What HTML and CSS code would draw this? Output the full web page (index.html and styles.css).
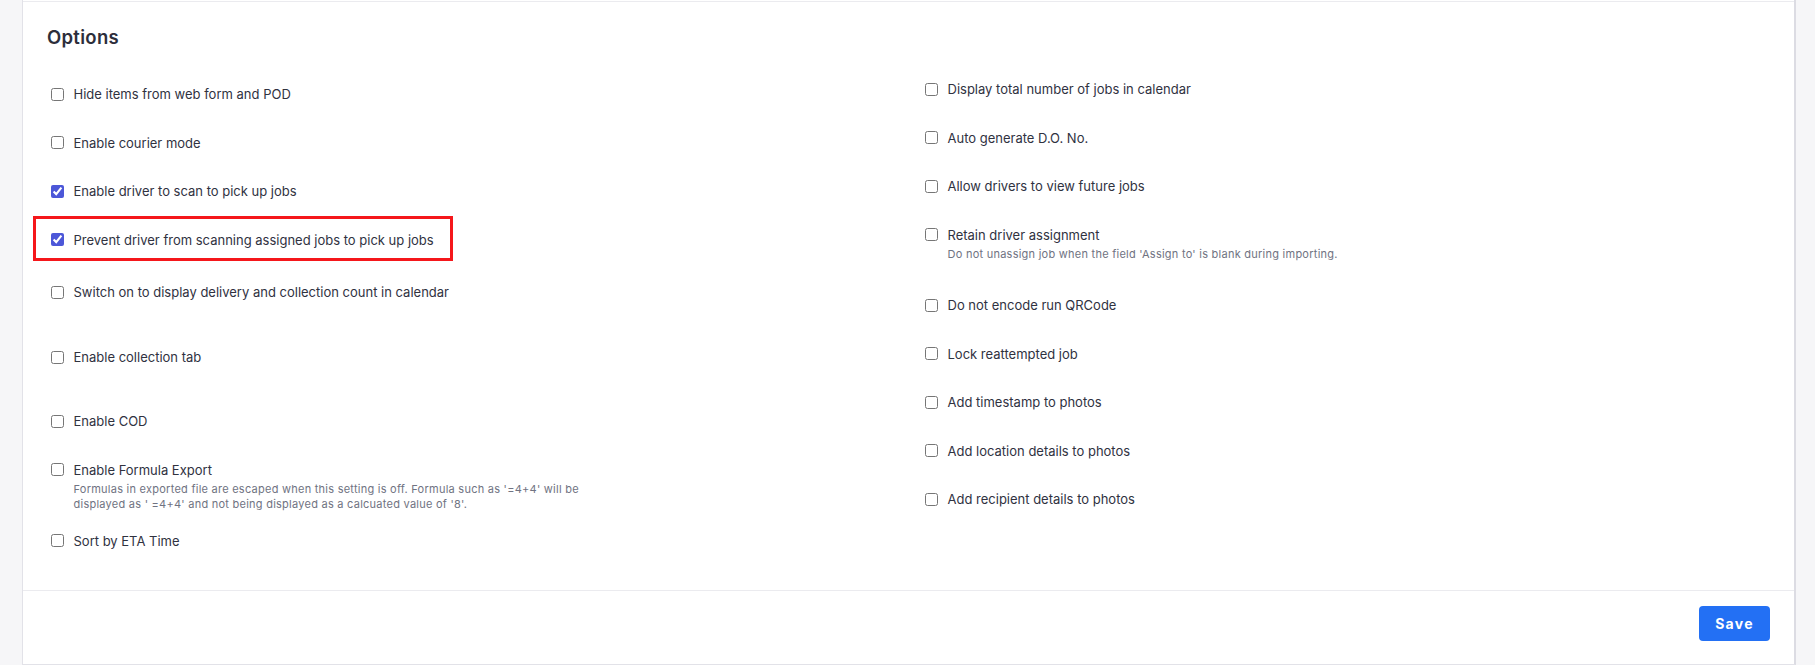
FILE: index.html
```html
<!DOCTYPE html>
<html lang="en">
<head>
  <meta charset="UTF-8" />
  <meta name="viewport" content="width=device-width, initial-scale=1.0" />
  <title>Options</title>
  <link rel="stylesheet" href="styles.css">
</head>
<body>
  <section class="card">
    <div class="card-body">
      <h2 class="card-title">Options</h2>

      <div class="options-grid">
        <!-- left column -->
        <div class="options-col options-col--left">
          <label class="option"><input type="checkbox" /><span class="option-label">Hide items from web form and POD</span></label>
          <label class="option"><input type="checkbox" /><span class="option-label">Enable courier mode</span></label>
          <label class="option"><input type="checkbox" checked /><span class="option-label">Enable driver to scan to pick up jobs</span></label>
          <label class="option option--highlight"><input type="checkbox" checked /><span class="option-label">Prevent driver from scanning assigned jobs to pick up jobs</span></label>
          <label class="option option--after-highlight"><input type="checkbox" /><span class="option-label">Switch on to display delivery and collection count in calendar</span></label>
          <label class="option option--gap-lg"><input type="checkbox" /><span class="option-label">Enable collection tab</span></label>
          <label class="option option--gap-lg2"><input type="checkbox" /><span class="option-label">Enable COD</span></label>
          <label class="option">
            <input type="checkbox" />
            <span class="option-body">
              <span class="option-label">Enable Formula Export</span>
              <span class="option-desc">Formulas in exported file are escaped when this setting is off. Formula such as '=4+4' will be displayed as ' =4+4' and not being displayed as a calcuated value of '8'.</span>
            </span>
          </label>
          <label class="option option--gap-sm"><input type="checkbox" /><span class="option-label">Sort by ETA Time</span></label>
        </div>

        <!-- right column -->
        <div class="options-col">
          <label class="option"><input type="checkbox" /><span class="option-label">Display total number of jobs in calendar</span></label>
          <label class="option"><input type="checkbox" /><span class="option-label">Auto generate D.O. No.</span></label>
          <label class="option"><input type="checkbox" /><span class="option-label">Allow drivers to view future jobs</span></label>
          <label class="option">
            <input type="checkbox" />
            <span class="option-body">
              <span class="option-label">Retain driver assignment</span>
              <span class="option-desc option-desc--single">Do not unassign job when the field 'Assign to' is blank during importing.</span>
            </span>
          </label>
          <label class="option"><input type="checkbox" /><span class="option-label">Do not encode run QRCode</span></label>
          <label class="option"><input type="checkbox" /><span class="option-label">Lock reattempted job</span></label>
          <label class="option"><input type="checkbox" /><span class="option-label">Add timestamp to photos</span></label>
          <label class="option"><input type="checkbox" /><span class="option-label">Add location details to photos</span></label>
          <label class="option"><input type="checkbox" /><span class="option-label">Add recipient details to photos</span></label>
        </div>
      </div>
    </div>

    <div class="card-footer">
      <button class="btn-save" type="button">Save</button>
    </div>
  </section>
</body>
</html>
```

FILE: styles.css
```css
body {
  margin: 0;
  padding: 0 19px 1px 22px;
  background: #f6f6f8;
  font-family: Inter, "Open Sans", sans-serif;
  color: #30323f;
}
/* main card */
.card {
  background: #fff;
  padding-top: 1px;
  border-left: 1px solid #e2e2e8;
  border-right: 2px solid #dcdce3;
  border-bottom: 1px solid #e2e2e8;
}
.card-body {
  border-top: 1px solid #ebebef;
  padding: 23px 24px 39px;
}
.card-title {
  margin: 0;
  font-size: 18.5px;
  line-height: 24px;
  font-weight: 600;
  letter-spacing: 0.3px;
  color: #2c2e3b;
}
.options-grid {
  display: grid;
  grid-template-columns: 1fr 1fr;
  column-gap: 25px;
  margin-top: 30px;
}
.options-col {
  display: flex;
  flex-direction: column;
  align-items: flex-start;
  gap: 28.5px;
}
.options-col--left {
  padding-top: 5px;
}
.option {
  display: flex;
  align-items: flex-start;
  font-size: 13px;
  line-height: 20px;
  cursor: pointer;
}
.option input {
  width: 13px;
  height: 13px;
  margin: 3.5px 10px 0 3.5px;
  accent-color: #4c57d8;
  flex-shrink: 0;
}
.option-body {
  display: flex;
  flex-direction: column;
}
.option-desc {
  margin-top: 2px;
  max-width: 515px;
  font-size: 11px;
  line-height: 15px;
  letter-spacing: 0.25px;
  color: #707382;
}
.option-desc--single {
  margin-bottom: 5px;
}
/* spacing tweaks on the left column */
.option--after-highlight { margin-top: 4px; }
.option--gap-lg { margin-top: 16.5px; }
.option--gap-lg2 { margin-top: 15.5px; }
.option--gap-sm { margin-top: -9.5px; }

/* red annotation round the row */
.option--highlight {
  position: relative;
}
.option--highlight::after {
  content: "";
  position: absolute;
  top: -14px;
  bottom: -11px;
  left: -14px;
  right: -19px;
  border: 3px solid #f5171b;
  pointer-events: none;
}
.card-footer {
  display: flex;
  justify-content: flex-end;
  border-top: 1px solid #ebebef;
  padding: 15px 24px 23px;
}
.btn-save {
  width: 71px;
  height: 35px;
  border: none;
  border-radius: 4px;
  background: #2370f4;
  color: #fff;
  font-family: Inter, sans-serif;
  font-size: 14px;
  font-weight: 700;
  letter-spacing: 1.3px;
  cursor: pointer;
}
```
